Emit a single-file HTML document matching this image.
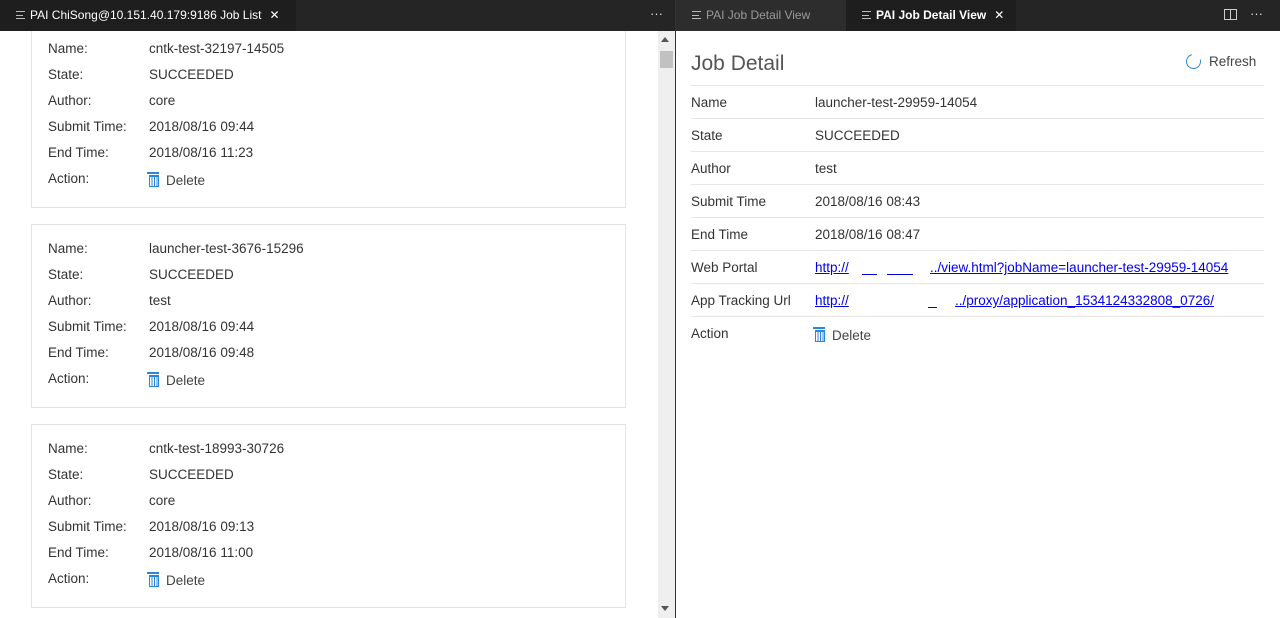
<!DOCTYPE html><html><head><style>
*{margin:0;padding:0;box-sizing:border-box}
body{width:1280px;height:618px;overflow:hidden;background:#fff;font-family:"Liberation Sans",sans-serif;position:relative;font-size:13px;color:#333}
.bar{position:absolute;top:0;height:31px;background:#252526}
.tab{position:absolute;top:0;height:31px;line-height:30px;font-size:12px;color:#fff;padding-left:16px;white-space:nowrap;overflow:hidden}
.tab .ic{position:absolute;left:16px;top:11px;width:9px;height:8px;border-top:1px solid #bbb;border-bottom:1px solid #bbb}
.tab .ic:after{content:"";position:absolute;left:0;top:2.5px;width:7px;height:1px;background:#bbb}
.tab span.t{margin-left:14px}
.x{margin-left:8px;font-size:12px}
.left{position:absolute;left:0;top:31px;width:658px;height:587px;overflow:hidden}
.card{position:absolute;left:31px;width:595px;border:1px solid #e3e3e3;background:#fff}
.r{position:absolute;left:16px;font-size:13.5px;color:#333;white-space:nowrap}
.r b{font-weight:normal;display:inline-block;width:101px}
.trash{display:inline-block;width:10px;height:12px;border:1.5px solid #2b88d8;border-top-width:2px;vertical-align:-2px;margin-right:7px;position:relative;background:repeating-linear-gradient(90deg,transparent 0 1.5px,#2b88d8 1.5px 2.5px)}
.trash:before{content:"";position:absolute;left:-3px;top:-5px;width:12px;height:2px;background:#2b88d8}
.del{color:#444}
.dr{position:absolute;left:691px;width:573px;border-top:1px solid #e5e5e5;height:33px;font-size:13.5px;line-height:34px}
.dr b{font-weight:normal;position:absolute;left:0}
.dr i{font-style:normal;position:absolute;left:124px}
a{color:#00e;text-decoration:underline}
</style></head><body>
<div class="left">
<div class="card" style="top:-11px;height:188px">
<div class="r" style="top:20px"><b>Name:</b>cntk-test-32197-14505</div>
<div class="r" style="top:46px"><b>State:</b>SUCCEEDED</div>
<div class="r" style="top:72px"><b>Author:</b>core</div>
<div class="r" style="top:98px"><b>Submit Time:</b>2018/08/16 09:44</div>
<div class="r" style="top:124px"><b>End Time:</b>2018/08/16 11:23</div>
<div class="r" style="top:150px"><b>Action:</b><span style="position:relative;top:2px"><span class="trash"></span><span class="del">Delete</span></span></div>
</div>
<div class="card" style="top:193px;height:184px">
<div class="r" style="top:16px"><b>Name:</b>launcher-test-3676-15296</div>
<div class="r" style="top:42px"><b>State:</b>SUCCEEDED</div>
<div class="r" style="top:68px"><b>Author:</b>test</div>
<div class="r" style="top:94px"><b>Submit Time:</b>2018/08/16 09:44</div>
<div class="r" style="top:120px"><b>End Time:</b>2018/08/16 09:48</div>
<div class="r" style="top:146px"><b>Action:</b><span style="position:relative;top:2px"><span class="trash"></span><span class="del">Delete</span></span></div>
</div>
<div class="card" style="top:393px;height:184px">
<div class="r" style="top:16px"><b>Name:</b>cntk-test-18993-30726</div>
<div class="r" style="top:42px"><b>State:</b>SUCCEEDED</div>
<div class="r" style="top:68px"><b>Author:</b>core</div>
<div class="r" style="top:94px"><b>Submit Time:</b>2018/08/16 09:13</div>
<div class="r" style="top:120px"><b>End Time:</b>2018/08/16 11:00</div>
<div class="r" style="top:146px"><b>Action:</b><span style="position:relative;top:2px"><span class="trash"></span><span class="del">Delete</span></span></div>
</div>
</div>

<div class="bar" style="left:0;width:675px"></div>
<div class="tab" style="left:0;width:296px;background:#1e1e1e"><div class="ic" style="left:16px"></div><span class="t">PAI ChiSong@10.151.40.179:9186 Job List</span><span class="x">✕</span></div>
<div style="position:absolute;left:650px;top:6px;color:#ddd;font-size:13px">···</div>
<div style="position:absolute;left:675px;top:0;width:1px;height:618px;background:#333"></div>
<div class="bar" style="left:676px;width:604px"></div>
<div class="tab" style="left:676px;width:170px;background:#2d2d2d;color:#999"><div class="ic"></div><span class="t">PAI Job Detail View</span></div>
<div class="tab" style="left:846px;width:170px;background:#1e1e1e"><div class="ic"></div><span class="t" style="font-weight:bold">PAI Job Detail View</span><span class="x">✕</span></div>
<div style="position:absolute;left:1224px;top:9px;width:13px;height:11px;border:1.5px solid #ccc"><div style="position:absolute;left:4.5px;top:0;width:1.5px;height:9px;background:#ccc"></div></div>
<div style="position:absolute;left:1250px;top:6px;color:#ddd;font-size:13px">···</div>

<div style="position:absolute;left:658px;top:31px;width:17px;height:587px;background:#efefef"></div>
<div style="position:absolute;left:661px;top:37px;width:0;height:0;border-left:4.5px solid transparent;border-right:4.5px solid transparent;border-bottom:5px solid #555"></div>
<div style="position:absolute;left:660px;top:51px;width:13px;height:17px;background:#c1c1c1"></div>
<div style="position:absolute;left:661px;top:606px;width:0;height:0;border-left:4.5px solid transparent;border-right:4.5px solid transparent;border-top:5px solid #555"></div>

<div style="position:absolute;left:691px;top:52px;font-size:21px;color:#555">Job Detail</div>
<div style="position:absolute;left:1186px;top:54px;width:15px;height:15px;border:1.5px solid #2b88d8;border-radius:50%;border-top-color:transparent;transform:rotate(30deg)"></div>
<div style="position:absolute;left:1209px;top:54px;font-size:13.5px;color:#444">Refresh</div>

<div class="dr" style="top:85px"><b>Name</b><i>launcher-test-29959-14054</i></div>
<div class="dr" style="top:118px"><b>State</b><i>SUCCEEDED</i></div>
<div class="dr" style="top:151px"><b>Author</b><i>test</i></div>
<div class="dr" style="top:184px"><b>Submit Time</b><i>2018/08/16 08:43</i></div>
<div class="dr" style="top:217px"><b>End Time</b><i>2018/08/16 08:47</i></div>
<div class="dr" style="top:250px"><b>Web Portal</b><i><a>http://</a></i>
<span style="position:absolute;left:171px;top:23px;width:15px;height:1px;background:#00e"></span>
<span style="position:absolute;left:196px;top:23px;width:26px;height:1px;background:#00e"></span>
<span style="position:absolute;left:239px;top:0"><a>../view.html?jobName=launcher-test-29959-14054</a></span></div>
<div class="dr" style="top:283px"><b>App Tracking Url</b><i><a>http://</a></i>
<span style="position:absolute;left:237px;top:23px;width:9px;height:1px;background:#00e"></span>
<span style="position:absolute;left:264px;top:0"><a>../proxy/application_1534124332808_0726/</a></span></div>
<div class="dr" style="top:316px"><b>Action</b><i style="top:2px"><span class="trash"></span><span class="del">Delete</span></i></div>
</body></html>
